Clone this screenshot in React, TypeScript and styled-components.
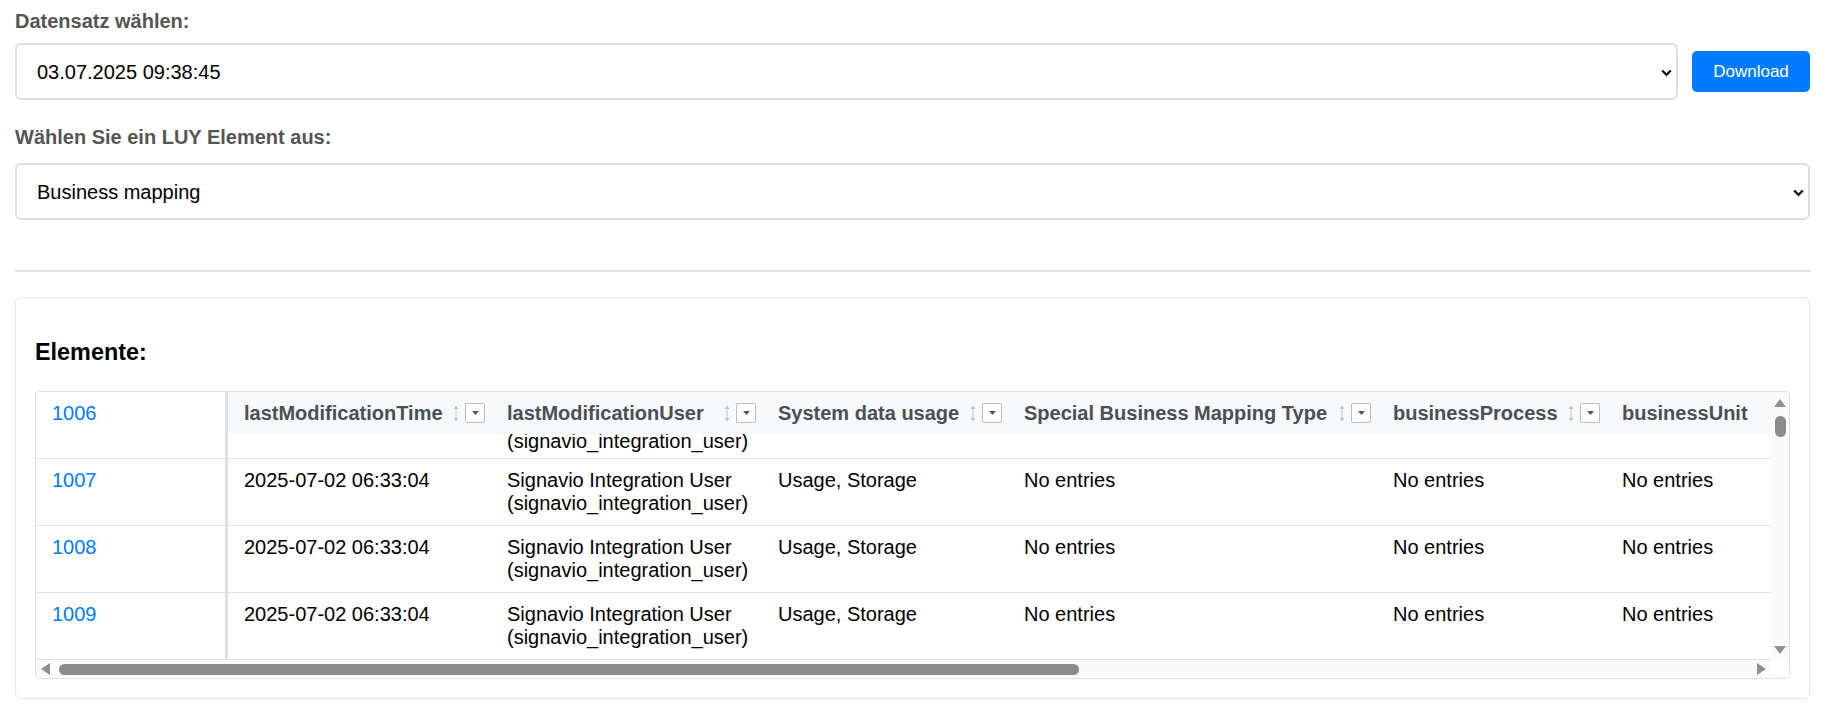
import React from 'react';
import styled, { createGlobalStyle } from 'styled-components';

const GlobalStyle = createGlobalStyle`
  html, body {
    margin: 0;
    padding: 0;
    background: #fff;
  }
  body {
    font-family: "Liberation Sans", Arial, sans-serif;
  }
  * {
    box-sizing: border-box;
  }
`;

const Page = styled.div`
  padding: 10px 18px 0 15px;
`;

const Field = styled.div<{ $top?: number }>`
  margin-top: ${(p) => p.$top ?? 0}px;
`;

const FieldLabel = styled.label<{ $gap: number }>`
  display: block;
  font-size: 20px;
  line-height: 23px;
  font-weight: bold;
  color: #555;
  margin-bottom: ${(p) => p.$gap}px;
`;

const SelectRow = styled.div`
  display: flex;
  align-items: center;
  gap: 14px;
`;

const SelectWrap = styled.div`
  position: relative;
  flex: 1;
`;

const Select = styled.select`
  appearance: none;
  display: block;
  width: 100%;
  height: 57px;
  padding: 0 40px 0 20px;
  border: 2px solid #dedede;
  border-radius: 6px;
  background: #fff;
  font-family: "Liberation Sans", Arial, sans-serif;
  font-size: 20px;
  color: #000;
  outline: none;
`;

const Chevron = styled.svg`
  position: absolute;
  right: 6px;
  top: 50%;
  margin-top: -3px;
  pointer-events: none;
`;

const DownloadButton = styled.button`
  width: 118px;
  height: 41px;
  border: none;
  border-radius: 5px;
  background: #007bff;
  color: #fff;
  font-family: "Liberation Sans", Arial, sans-serif;
  font-size: 17px;
  cursor: pointer;
`;

const Divider = styled.hr`
  margin: 50px 0 0;
  border: 0;
  height: 2px;
  background: #e2e3e5;
`;

const Card = styled.section`
  margin-top: 25px;
  border: 1px solid #e4e4e4;
  border-radius: 6px;
  padding: 0 19px 19px;
`;

const Heading = styled.h3`
  margin: 41px 0 25px;
  font-size: 23.4px;
  font-weight: bold;
  color: #000;
`;

const TableFrame = styled.div`
  display: grid;
  grid-template-columns: 1fr 18px;
  grid-template-rows: 268px 18px;
  border: 1px solid #dee2e6;
  border-radius: 4px;
  overflow: hidden;
`;

const Viewport = styled.div`
  display: flex;
  min-width: 0;
  overflow: hidden;
`;

const FrozenCol = styled.div`
  width: 192px;
  flex-shrink: 0;
  border-right: 3px solid #dee2e6;
  background: #fff;
`;

const FrozenCell = styled.div`
  height: 67px;
  padding: 10px 16px;
  border-bottom: 1px solid #dee2e6;
  font-size: 20px;
  line-height: 23px;
`;

const IdLink = styled.a`
  color: #007bff;
  text-decoration: none;
`;

const ScrollPane = styled.div`
  flex: 1;
  min-width: 0;
  display: flex;
  flex-direction: column;
  overflow: hidden;
`;

const HeaderRow = styled.div`
  display: flex;
  flex-shrink: 0;
  width: max-content;
  height: 42px;
  background: #f8f9fa;
`;

const HeadCell = styled.div<{ $w: number }>`
  width: ${(p) => p.$w}px;
  flex-shrink: 0;
  display: flex;
  align-items: center;
  padding: 0 6px 0 16px;
  font-size: 20px;
  line-height: 23px;
  font-weight: bold;
  color: #495057;
  white-space: nowrap;
`;

const HeadTools = styled.div`
  margin-left: auto;
  display: flex;
  align-items: center;
  gap: 5px;
`;

const FilterBox = styled.span`
  width: 20px;
  height: 20px;
  display: flex;
  align-items: center;
  justify-content: center;
  border: 1px solid #bdbdbd;
  border-radius: 2px;
  background: #fff;
`;

/* body area; the first row (1006) is scrolled up, only its tail shows */
const BodyClip = styled.div`
  flex: 1;
  overflow: hidden;
`;

const BodyRow = styled.div<{ $h: number }>`
  display: flex;
  width: max-content;
  height: ${(p) => p.$h}px;
  border-bottom: 1px solid #dee2e6;
`;

const BodyCell = styled.div<{ $w: number }>`
  width: ${(p) => p.$w}px;
  flex-shrink: 0;
  padding: 10px 16px;
  font-size: 20px;
  line-height: 23px;
  color: #000;
`;

const TailCell = styled(BodyCell)`
  padding-top: 0;
  padding-bottom: 0;
  line-height: 15px;
`;

const VScroll = styled.div`
  display: flex;
  flex-direction: column;
  align-items: center;
  background: #fafafa;
`;

const HScroll = styled.div`
  display: flex;
  align-items: center;
  background: #fafafa;
`;

const Corner = styled.div`
  background: #fff;
`;

const Thumb = styled.div<{ $len: number; $vertical?: boolean; $offset: number }>`
  width: ${(p) => (p.$vertical ? 11 : p.$len)}px;
  height: ${(p) => (p.$vertical ? p.$len : 11)}px;
  margin: ${(p) => (p.$vertical ? `${p.$offset}px 0 0` : `0 0 0 ${p.$offset}px`)};
  border-radius: 6px;
  background: #8b8b8b;
  flex-shrink: 0;
`;

const Spacer = styled.div`
  flex: 1;
`;

const Arrow = styled.svg<{ $m: string }>`
  display: block;
  flex-shrink: 0;
  margin: ${(p) => p.$m};
`;

const columns = [
  { title: 'lastModificationTime', width: 263 },
  { title: 'lastModificationUser', width: 271 },
  { title: 'System data usage', width: 246 },
  { title: 'Special Business Mapping Type', width: 369 },
  { title: 'businessProcess', width: 229 },
  { title: 'businessUnit', width: 260 },
];

const ids = ['1006', '1007', '1008', '1009'];

const cells = [
  '2025-07-02 06:33:04',
  'Signavio Integration User (signavio_integration_user)',
  'Usage, Storage',
  'No entries',
  'No entries',
  'No entries',
];

// what is still visible of row 1006 below the header
const tail = ['', '(signavio_integration_user)', '', '', '', ''];

const SelectChevron: React.FC = () => (
  <Chevron width="11" height="8" viewBox="0 0 11 8">
    <path d="M1.2 1.5 L5.5 5.8 L9.8 1.5" fill="none" stroke="#111" strokeWidth="2.3" />
  </Chevron>
);

const SortIcon: React.FC = () => (
  <svg width="8" height="17" viewBox="0 0 8 17">
    <line x1="4" y1="3" x2="4" y2="14" stroke="#c4c4c4" strokeWidth="1" />
    <path d="M4 0.5 L6.5 4 L1.5 4 Z" fill="#c4c4c4" />
    <path d="M4 16.5 L6.5 13 L1.5 13 Z" fill="#c4c4c4" />
  </svg>
);

const App: React.FC = () => {
  return (
    <>
      <GlobalStyle />
      <Page>
        <Field>
          <FieldLabel $gap={10}>Datensatz wählen:</FieldLabel>
          <SelectRow>
            <SelectWrap>
              <Select defaultValue="1">
                <option value="1">03.07.2025 09:38:45</option>
              </Select>
              <SelectChevron />
            </SelectWrap>
            <DownloadButton>Download</DownloadButton>
          </SelectRow>
        </Field>
        <Field $top={26}>
          <FieldLabel $gap={14}>Wählen Sie ein LUY Element aus:</FieldLabel>
          <SelectWrap>
            <Select defaultValue="bm">
              <option value="bm">Business mapping</option>
            </Select>
            <SelectChevron />
          </SelectWrap>
        </Field>
        <Divider />
        <Card>
          <Heading>Elemente:</Heading>
          <TableFrame>
            <Viewport>
              <FrozenCol>
                {ids.map((id) => (
                  <FrozenCell key={id}>
                    <IdLink href="#">{id}</IdLink>
                  </FrozenCell>
                ))}
              </FrozenCol>
              <ScrollPane>
                <HeaderRow>
                  {columns.map((c) => (
                    <HeadCell key={c.title} $w={c.width}>
                      {c.title}
                      <HeadTools>
                        <SortIcon />
                        <FilterBox>
                          <svg width="7" height="4" viewBox="0 0 7 4">
                            <path d="M0 0 L7 0 L3.5 4 Z" fill="#555" />
                          </svg>
                        </FilterBox>
                      </HeadTools>
                    </HeadCell>
                  ))}
                </HeaderRow>
                <BodyClip>
                  <BodyRow $h={25}>
                    {tail.map((text, i) => (
                      <TailCell key={i} $w={columns[i].width}>
                        {text}
                      </TailCell>
                    ))}
                  </BodyRow>
                  {ids.slice(1).map((id) => (
                    <BodyRow key={id} $h={67}>
                      {cells.map((text, i) => (
                        <BodyCell key={i} $w={columns[i].width}>
                          {text}
                        </BodyCell>
                      ))}
                    </BodyRow>
                  ))}
                </BodyClip>
              </ScrollPane>
            </Viewport>
            <VScroll>
              <Arrow $m="7px 0 0" width="12" height="8" viewBox="0 0 12 8">
                <path d="M6 0 L12 8 L0 8 Z" fill="#8f8f8f" />
              </Arrow>
              <Thumb $vertical $len={21} $offset={9} />
              <Spacer />
              <Arrow $m="0 0 6px" width="12" height="8" viewBox="0 0 12 8">
                <path d="M0 0 L12 0 L6 8 Z" fill="#8f8f8f" />
              </Arrow>
            </VScroll>
            <HScroll>
              <Arrow $m="0 0 0 5px" width="9" height="12" viewBox="0 0 9 12">
                <path d="M0 6 L9 0 L9 12 Z" fill="#8f8f8f" />
              </Arrow>
              <Thumb $len={1020} $offset={9} />
              <Spacer />
              <Arrow $m="0 5px 0 0" width="9" height="12" viewBox="0 0 9 12">
                <path d="M0 0 L9 6 L0 12 Z" fill="#8f8f8f" />
              </Arrow>
            </HScroll>
            <Corner />
          </TableFrame>
        </Card>
      </Page>
    </>
  );
};

export default App;
